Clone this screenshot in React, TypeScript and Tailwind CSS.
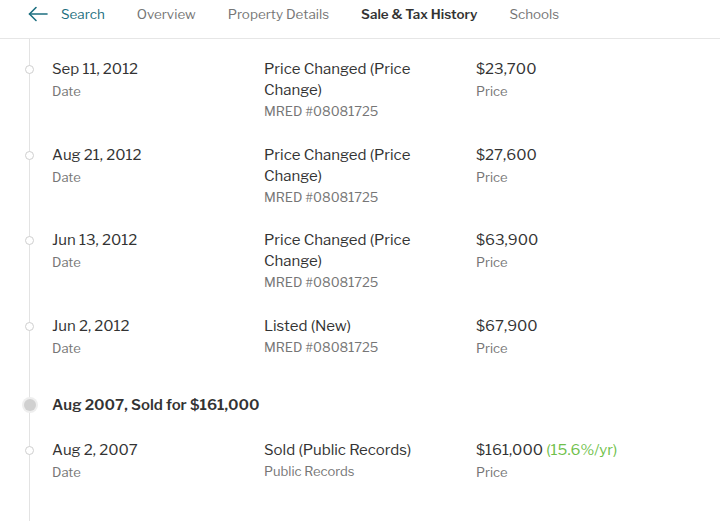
import React from 'react';

type Row = {
  date: string;
  event: string;
  source: string;
  price: string;
  extra?: string;
};

const rows2012: Row[] = [
  { date: 'Sep 11, 2012', event: 'Price Changed (Price Change)', source: 'MRED #08081725', price: '$23,700' },
  { date: 'Aug 21, 2012', event: 'Price Changed (Price Change)', source: 'MRED #08081725', price: '$27,600' },
  { date: 'Jun 13, 2012', event: 'Price Changed (Price Change)', source: 'MRED #08081725', price: '$63,900' },
  { date: 'Jun 2, 2012', event: 'Listed (New)', source: 'MRED #08081725', price: '$67,900' },
];

const rows2007: Row[] = [
  { date: 'Aug 2, 2007', event: 'Sold (Public Records)', source: 'Public Records', price: '$161,000', extra: '(15.6%/yr)' },
];

const HistoryRow = ({ row }: { row: Row }) => (
  <div className="relative flex pl-[22px] pb-[22.67px]">
    {/* hollow dot on the timeline */}
    <span className="absolute -left-[5px] top-[6px] w-[9px] h-[9px] rounded-full border border-[#cfcfcf] bg-white" />
    <div className="w-[212px] shrink-0">
      <div className="text-[15px] leading-[21px] text-[#333]">{row.date}</div>
      <div className="text-[13px] leading-[23px] text-[#767676]">Date</div>
    </div>
    <div className="w-[212px] shrink-0 pr-[30px]">
      <div className="text-[15px] leading-[21px] text-[#333] max-w-[172px]">{row.event}</div>
      <div className="text-[13px] leading-[21px] text-[#767676]">{row.source}</div>
    </div>
    <div>
      <div className="text-[15px] leading-[21px] text-[#333]">
        {row.price}
        {row.extra && <span className="text-[#6fbf4b]"> {row.extra}</span>}
      </div>
      <div className="text-[13px] leading-[23px] text-[#767676]">Price</div>
    </div>
  </div>
);

export default function App() {
  return (
    <div
      className="w-[720px] h-[521px] overflow-hidden bg-white"
      style={{ fontFamily: '"Libre Franklin", Lato, "Liberation Sans", sans-serif' }}
    >
      {/* top nav */}
      <div className="h-[39px] border-b border-[#e6e6e6] flex items-start pt-[4px] pl-[28px] gap-[32px] text-[13.4px] leading-[20px] text-[#767676]">
        <div className="flex items-center gap-[13px] text-[#1d6f80]">
          <svg width="20" height="16" viewBox="0 0 20 16" fill="none" stroke="currentColor" strokeWidth="1.6" strokeLinecap="round" strokeLinejoin="round">
            <path d="M19 8H1.5" />
            <path d="M8 1.5L1.5 8L8 14.5" />
          </svg>
          <span>Search</span>
        </div>
        <span>Overview</span>
        <span>Property Details</span>
        <span className="font-semibold text-[#333]">Sale &amp; Tax History</span>
        <span>Schools</span>
      </div>

      {/* timeline */}
      <div className="ml-[29px] border-l border-[#e3e3e3] pt-[20px] h-[482px]">
        {rows2012.map((r) => (
          <HistoryRow key={r.date} row={r} />
        ))}

        <div className="relative pl-[22px] mt-[12.5px] pb-[24px]">
          <span className="absolute -left-[6.5px] top-[4px] w-[12px] h-[12px] rounded-full bg-[#d0d0d0] ring-2 ring-[#eeeeee]" />
          <div className="text-[15px] leading-[21px] font-semibold text-[#333]">Aug 2007, Sold for $161,000</div>
        </div>

        {rows2007.map((r) => (
          <HistoryRow key={r.date} row={r} />
        ))}
      </div>
    </div>
  );
}
